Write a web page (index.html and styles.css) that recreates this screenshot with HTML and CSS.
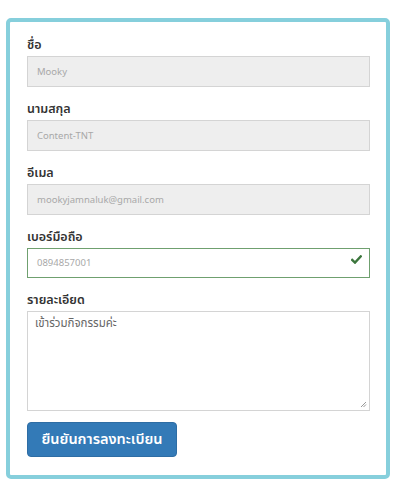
FILE: index.html
```html
<!DOCTYPE html>
<html lang="th">
<head>
<meta charset="utf-8">
<link rel="stylesheet" href="styles.css">
</head>
<body>
<form class="card">
  <div class="group">
    <label class="label">ชื่อ</label>
    <div class="input readonly">Mooky</div>
  </div>
  <div class="group">
    <label class="label">นามสกุล</label>
    <div class="input readonly">Content-TNT</div>
  </div>
  <div class="group">
    <label class="label">อีเมล</label>
    <div class="input readonly">mookyjamnaluk@gmail.com</div>
  </div>
  <div class="group">
    <label class="label">เบอร์มือถือ</label>
    <div class="input success">0894857001
      <svg class="check" width="11" height="9" viewBox="0 0 11 9"><path d="M1.2 5 L4 7.6 L9.8 1.4" fill="none" stroke="#3c763d" stroke-width="2.4" stroke-linecap="square"/></svg>
    </div>
  </div>
  <div class="group last">
    <label class="label">รายละเอียด</label>
    <div class="textarea">เข้าร่วมกิจกรรมค่ะ
      <svg class="grip" width="7" height="7" viewBox="0 0 7 7"><path d="M6 1 L1 6 M6 3.5 L3.5 6" stroke="#999" stroke-width="1"/></svg>
    </div>
  </div>
  <button type="button" class="btn">ยืนยันการลงทะเบียน</button>
</form>
</body>
</html>
```
FILE: styles.css
```css
* { box-sizing: border-box; }
body {
  margin: 0;
  background: #fff;
  font-family: "Noto Sans Thai", "Noto Sans", "DejaVu Sans", sans-serif;
}
.card {
  margin: 18px 0 0 6px;
  width: 384px;
  height: 461px;
  border: 4px solid #86cfdc;
  border-radius: 5px;
  padding: 10px 16px 17px 17px;
  display: flex;
  flex-direction: column;
}
.group { display: flex; flex-direction: column; margin-bottom: 9px; }
.group.last { margin-bottom: 11px; }
.label {
  font-size: 12.5px;
  font-weight: 600;
  color: #333;
  line-height: 24px;
  height: 24px;
  padding-top: 2px;
}
.input {
  position: relative;
  height: 31px;
  border: 1px solid #d4d4d4;
  padding: 0 9px;
  display: flex;
  align-items: center;
  font-size: 9.5px;
  color: #a8a8a8;
  background: #fff;
}
.input.readonly { background: #eeeeee; }
.input.success { border-color: #6fa06f; height: 30px; }
.check { position: absolute; right: 7px; top: 6px; }
.textarea {
  position: relative;
  height: 100px;
  border: 1px solid #d4d4d4;
  padding: 4px 7px;
  font-size: 11.5px;
  color: #666;
  line-height: 16px;
}
.grip { position: absolute; right: 2px; bottom: 2px; }
.btn {
  align-self: flex-start;
  width: 150px;
  height: 35px;
  background: #337ab7;
  border: 1px solid #2e6da4;
  border-radius: 4px;
  color: #fff;
  font-family: inherit;
  font-size: 14.5px;
  font-weight: 600;
  padding: 0;
}
```
